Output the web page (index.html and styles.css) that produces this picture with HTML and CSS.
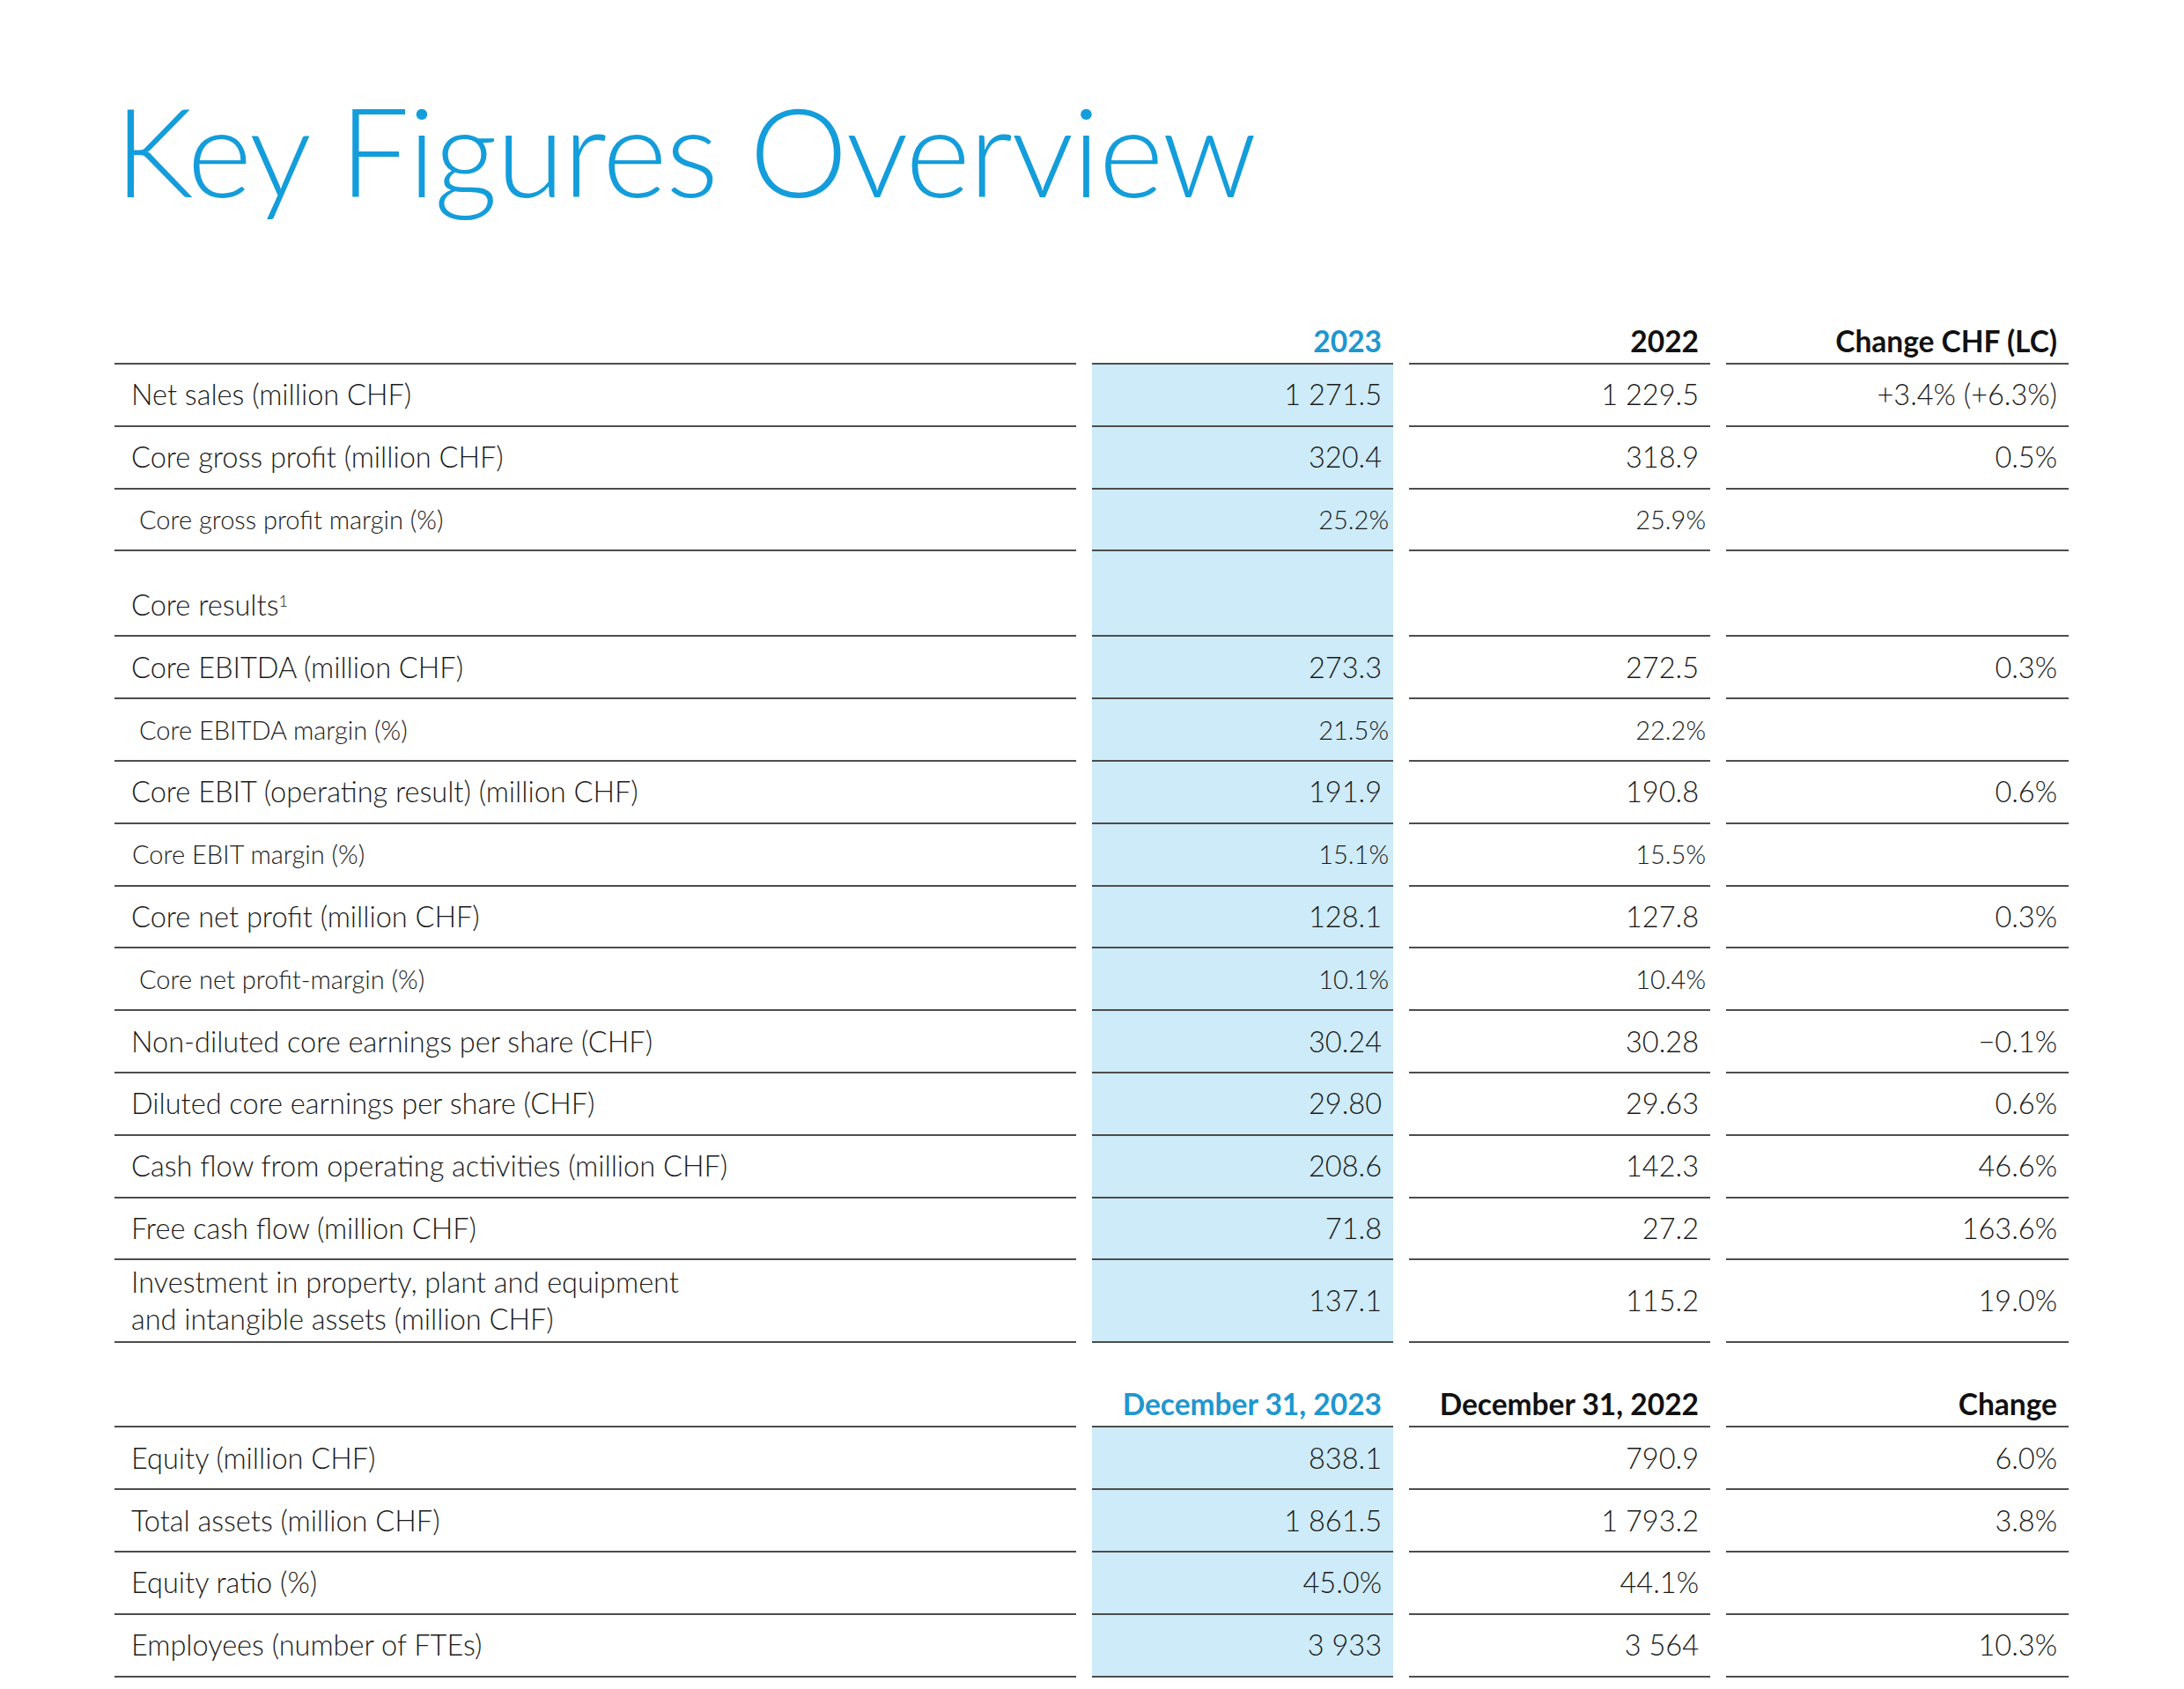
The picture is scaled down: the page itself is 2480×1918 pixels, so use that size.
FILE: index.html
```html
<!DOCTYPE html>
<html lang="en">
<head>
<meta charset="utf-8">
<title>Key Figures Overview</title>
<link rel="stylesheet" href="styles.css">
</head>
<body>
<main class="page">
  <h1 class="title">Key Figures Overview</h1>
  <section class="figures">
    <div class="row head">
      <div class="cell"></div>
      <div class="cell num hl">2023</div>
      <div class="cell num">2022</div>
      <div class="cell num">Change CHF (LC)</div>
    </div>
    <div class="row">
      <div class="cell label">Net sales (million CHF)</div>
      <div class="cell num cur">1 271.5</div>
      <div class="cell num">1 229.5</div>
      <div class="cell num">+3.4% (+6.3%)</div>
    </div>
    <div class="row">
      <div class="cell label">Core gross profit (million CHF)</div>
      <div class="cell num cur">320.4</div>
      <div class="cell num">318.9</div>
      <div class="cell num">0.5%</div>
    </div>
    <div class="row sub">
      <div class="cell label">Core gross profit margin (%)</div>
      <div class="cell num cur">25.2%</div>
      <div class="cell num">25.9%</div>
      <div class="cell num"></div>
    </div>
    <div class="row section">
      <div class="cell label">Core results<sup>1</sup></div>
      <div class="cell num cur"></div>
      <div class="cell num"></div>
      <div class="cell num"></div>
    </div>
    <div class="row">
      <div class="cell label">Core EBITDA (million CHF)</div>
      <div class="cell num cur">273.3</div>
      <div class="cell num">272.5</div>
      <div class="cell num">0.3%</div>
    </div>
    <div class="row sub">
      <div class="cell label">Core EBITDA margin (%)</div>
      <div class="cell num cur">21.5%</div>
      <div class="cell num">22.2%</div>
      <div class="cell num"></div>
    </div>
    <div class="row">
      <div class="cell label">Core EBIT (operating result) (million CHF)</div>
      <div class="cell num cur">191.9</div>
      <div class="cell num">190.8</div>
      <div class="cell num">0.6%</div>
    </div>
    <div class="row sub flush">
      <div class="cell label">Core EBIT margin (%)</div>
      <div class="cell num cur">15.1%</div>
      <div class="cell num">15.5%</div>
      <div class="cell num"></div>
    </div>
    <div class="row">
      <div class="cell label">Core net profit (million CHF)</div>
      <div class="cell num cur">128.1</div>
      <div class="cell num">127.8</div>
      <div class="cell num">0.3%</div>
    </div>
    <div class="row sub">
      <div class="cell label">Core net profit-margin (%)</div>
      <div class="cell num cur">10.1%</div>
      <div class="cell num">10.4%</div>
      <div class="cell num"></div>
    </div>
    <div class="row">
      <div class="cell label">Non-diluted core earnings per share (CHF)</div>
      <div class="cell num cur">30.24</div>
      <div class="cell num">30.28</div>
      <div class="cell num">&#8722;0.1%</div>
    </div>
    <div class="row">
      <div class="cell label">Diluted core earnings per share (CHF)</div>
      <div class="cell num cur">29.80</div>
      <div class="cell num">29.63</div>
      <div class="cell num">0.6%</div>
    </div>
    <div class="row">
      <div class="cell label">Cash flow from operating activities (million CHF)</div>
      <div class="cell num cur">208.6</div>
      <div class="cell num">142.3</div>
      <div class="cell num">46.6%</div>
    </div>
    <div class="row">
      <div class="cell label">Free cash flow (million CHF)</div>
      <div class="cell num cur">71.8</div>
      <div class="cell num">27.2</div>
      <div class="cell num">163.6%</div>
    </div>
    <div class="row double">
      <div class="cell label">Investment in property, plant and equipment<br>and intangible assets (million CHF)</div>
      <div class="cell num cur">137.1</div>
      <div class="cell num">115.2</div>
      <div class="cell num">19.0%</div>
    </div>
    <div class="row head second">
      <div class="cell"></div>
      <div class="cell num hl">December 31, 2023</div>
      <div class="cell num">December 31, 2022</div>
      <div class="cell num">Change</div>
    </div>
    <div class="row">
      <div class="cell label">Equity (million CHF)</div>
      <div class="cell num cur">838.1</div>
      <div class="cell num">790.9</div>
      <div class="cell num">6.0%</div>
    </div>
    <div class="row">
      <div class="cell label">Total assets (million CHF)</div>
      <div class="cell num cur">1 861.5</div>
      <div class="cell num">1 793.2</div>
      <div class="cell num">3.8%</div>
    </div>
    <div class="row">
      <div class="cell label">Equity ratio (%)</div>
      <div class="cell num cur">45.0%</div>
      <div class="cell num">44.1%</div>
      <div class="cell num"></div>
    </div>
    <div class="row">
      <div class="cell label">Employees (number of FTEs)</div>
      <div class="cell num cur">3 933</div>
      <div class="cell num">3 564</div>
      <div class="cell num">10.3%</div>
    </div>
  </section>
</main>
</body>
</html>
```

FILE: styles.css
```css
html, body {
  margin: 0;
  padding: 0;
  background: #ffffff;
}

.page {
  padding: 85px 0 0 130px;
  font-family: Lato, "Open Sans", "Liberation Sans", sans-serif;
  font-weight: 300;
  color: #1a1a1a;
}

.title {
  margin: 0;
  font-family: Lato, "Open Sans", sans-serif;
  font-weight: 300;
  font-size: 141px;
  line-height: 169px;
  color: #139ddb;
  letter-spacing: -1.5px;
}

.figures {
  margin-top: 100px;
  width: 2219px;
}

.row {
  display: grid;
  grid-template-columns: 1092px 342px 342px 389px;
  column-gap: 18px;
  height: 70.8px;
  font-size: 32.5px;
  line-height: 38px;
}

.cell {
  box-sizing: border-box;
  border-bottom: 2px solid #4d4d4d;
  display: flex;
  align-items: center;
  white-space: nowrap;
}

.label {
  padding-left: 19px;
}

.num {
  justify-content: flex-end;
  padding-right: 13px;
}

.cur {
  background: #cdebf8;
}

.head {
  height: 60px;
  font-size: 33.5px;
  font-weight: 700;
  color: #111111;
}

.head .cell {
  align-items: flex-end;
  padding-bottom: 6px;
}

.head .hl {
  color: #1e97cf;
}

.head.second {
  height: 96px;
}

.sub {
  font-size: 29px;
}

.sub .label {
  padding-left: 28px;
}

.sub.flush .label {
  padding-left: 20px;
}

.sub .num {
  font-size: 29px;
  padding-right: 5px;
}

.section {
  height: 97px;
}

.section .cell {
  padding-top: 26px;
}

.label sup {
  font-size: 55%;
  line-height: 0;
  position: relative;
  top: -0.3em;
  vertical-align: super;
}

.double {
  height: 94px;
}

.double .label {
  white-space: normal;
  line-height: 42px;
}
```
